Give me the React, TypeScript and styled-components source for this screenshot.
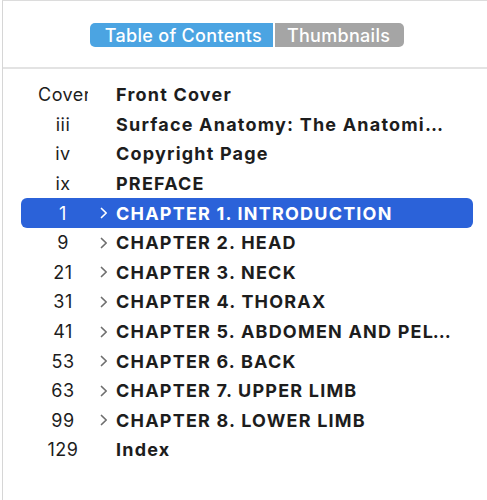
import React from 'react'
import styled, { createGlobalStyle } from 'styled-components'

const GlobalStyle = createGlobalStyle`
  html, body {
    margin: 0;
    padding: 0;
    background: #ffffff;
    overflow: hidden;
  }
  body {
    font-family: Inter, "Noto Sans", "Liberation Sans", sans-serif;
    -webkit-font-smoothing: antialiased;
  }
`

const Panel = styled.div`
  width: 485px;
  height: 500px;
  box-sizing: border-box;
  border-top: 1px solid #dcdcdc;
  border-left: 1px solid #d6d6d6;
  margin-left: 2px;
  background: #ffffff;
  overflow: hidden;
`

const Toolbar = styled.div`
  height: 68px;
  box-sizing: border-box;
  padding: 22px 0 0 4px;
  display: flex;
  justify-content: center;
  border-bottom: 2px solid #e3e3e3;
`

const Segmented = styled.div`
  display: flex;
  height: 24px;
  gap: 2px;
`

const Segment = styled.div<{ $active?: boolean }>`
  display: flex;
  align-items: center;
  justify-content: center;
  height: 24px;
  padding: ${({ $active }) => ($active ? '0 11px 0 15px' : '0 14px 0 12px')};
  background: ${({ $active }) => ($active ? '#4ba4e2' : '#a5a5a5')};
  color: #ffffff;
  font-size: 18px;
  font-weight: 500;
  letter-spacing: 0.3px;
  border-radius: ${({ $active }) => ($active ? '5px 0 0 5px' : '0 5px 5px 0')};
  box-sizing: border-box;
`

const List = styled.div`
  padding: 11px 14px 0 18px;
  display: flex;
  flex-direction: column;
`

const Row = styled.div<{ $selected?: boolean }>`
  height: 29.6px;
  display: grid;
  grid-template-columns: 17px 50px 12px 16px 335px;
  align-items: center;
  border-radius: 6px;
  background: ${({ $selected }) => ($selected ? '#2b62d9' : 'transparent')};
  color: ${({ $selected }) => ($selected ? '#ffffff' : '#1d1d1d')};
`

const PageNum = styled.div`
  grid-column: 2;
  font-size: 18px;
  font-weight: 400;
  letter-spacing: 0.5px;
  text-align: center;
  white-space: nowrap;
  overflow: hidden;
`

const Chevron = styled.svg<{ $selected?: boolean }>`
  grid-column: 4;
  width: 8px;
  height: 12px;
  stroke: ${({ $selected }) => ($selected ? '#ffffff' : '#6e6e6e')};
`

const Title = styled.div`
  grid-column: 5;
  font-size: 18px;
  font-weight: 700;
  white-space: nowrap;
  overflow: hidden;
  text-overflow: ellipsis;
  letter-spacing: 1.2px;
`

type Entry = { page: string; title: string; children?: boolean; selected?: boolean }

const entries: Entry[] = [
  { page: 'Cover', title: 'Front Cover' },
  { page: 'iii', title: 'Surface Anatomy: The Anatomical Basis of Clinical Examination' },
  { page: 'iv', title: 'Copyright Page' },
  { page: 'ix', title: 'PREFACE' },
  { page: '1', title: 'CHAPTER 1. INTRODUCTION', children: true, selected: true },
  { page: '9', title: 'CHAPTER 2. HEAD', children: true },
  { page: '21', title: 'CHAPTER 3. NECK', children: true },
  { page: '31', title: 'CHAPTER 4. THORAX', children: true },
  { page: '41', title: 'CHAPTER 5. ABDOMEN AND PELVIS', children: true },
  { page: '53', title: 'CHAPTER 6. BACK', children: true },
  { page: '63', title: 'CHAPTER 7. UPPER LIMB', children: true },
  { page: '99', title: 'CHAPTER 8. LOWER LIMB', children: true },
  { page: '129', title: 'Index' },
]

export default function App() {
  return (
    <>
      <GlobalStyle />
      <Panel>
        <Toolbar>
          <Segmented>
            <Segment $active>Table of Contents</Segment>
            <Segment>Thumbnails</Segment>
          </Segmented>
        </Toolbar>
        <List>
          {entries.map((e) => (
            <Row key={e.page} $selected={e.selected}>
              <PageNum>{e.page}</PageNum>
              {e.children && (
                <Chevron $selected={e.selected} viewBox="0 0 8 12" fill="none" strokeWidth="1.7" strokeLinecap="round" strokeLinejoin="round">
                  <path d="M1.5 1.5 L6.2 6 L1.5 10.5" />
                </Chevron>
              )}
              <Title>{e.title}</Title>
            </Row>
          ))}
        </List>
      </Panel>
    </>
  )
}
